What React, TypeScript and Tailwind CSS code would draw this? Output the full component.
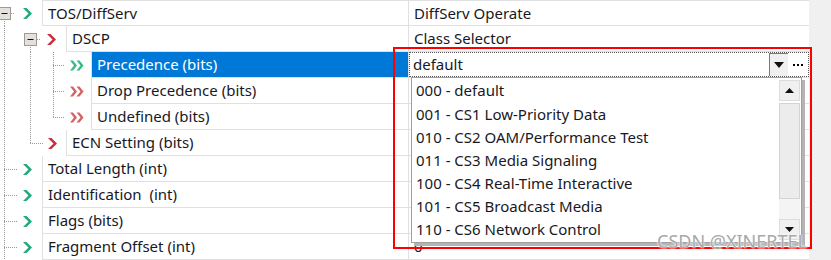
import React from "react";

type Seg = [number, number, number]; // x, y1, y2
type Row = {
  label: string;
  value?: string;
  indent: number;
  vlines: Seg[];
  hline?: [number, number];
  box?: number;
  icon: "green" | "red" | "green2" | "red2";
  iconX: number;
  selected?: boolean;
  editor?: boolean;
};

const rows: Row[] = [
  { label: "TOS/DiffServ", value: "DiffServ Operate", indent: 42, vlines: [[4, 19, 26]], hline: [11, 15], box: -2, icon: "green", iconX: 23 },
  { label: "DSCP", value: "Class Selector", indent: 66, vlines: [[4, 0, 26], [30, 19, 26]], hline: [37, 41], box: 24, icon: "red", iconX: 47 },
  { label: "Precedence (bits)", indent: 91, vlines: [[4, 0, 26], [30, 0, 26], [53, 0, 26]], hline: [53, 65], icon: "green2", iconX: 70, selected: true, editor: true },
  { label: "Drop Precedence (bits)", indent: 91, vlines: [[4, 0, 26], [30, 0, 26], [53, 0, 26]], hline: [53, 65], icon: "red2", iconX: 70 },
  { label: "Undefined (bits)", indent: 91, vlines: [[4, 0, 26], [30, 0, 26], [53, 0, 13]], hline: [53, 65], icon: "red2", iconX: 70 },
  { label: "ECN Setting (bits)", indent: 66, vlines: [[4, 0, 26], [30, 0, 13]], hline: [30, 44], icon: "red", iconX: 48 },
  { label: "Total Length (int)", indent: 42, vlines: [[4, 0, 26]], hline: [4, 18], icon: "green", iconX: 23 },
  { label: "Identification  (int)", indent: 42, vlines: [[4, 0, 26]], hline: [4, 18], icon: "green", iconX: 23 },
  { label: "Flags (bits)", indent: 42, vlines: [[4, 0, 26]], hline: [4, 18], icon: "green", iconX: 23 },
  { label: "Fragment Offset (int)", value: "0", indent: 42, vlines: [[4, 0, 26]], hline: [4, 18], icon: "green", iconX: 23 },
];

const options = [
  "000 - default",
  "001 - CS1 Low-Priority Data",
  "010 - CS2 OAM/Performance Test",
  "011 - CS3 Media Signaling",
  "100 - CS4 Real-Time Interactive",
  "101 - CS5 Broadcast Media",
  "110 - CS6 Network Control",
];

function Chevron({ x, color, y = 8, w = 9, h = 11, t = 3.5 }: { x: number; color: string; y?: number; w?: number; h?: number; t?: number }) {
  const m = y + h / 2;
  return <polygon points={`${x},${y} ${x + t},${y} ${x + w},${m} ${x + t},${y + h} ${x},${y + h} ${x + w - t},${m}`} fill={color} />;
}

function Gutter({ row }: { row: Row }) {
  const dot = "#9a9a9a";
  const dbl = row.icon === "green2" ? "#3cb884" : "#d06464";
  return (
    <svg width={row.indent} height={26} className="block shrink-0">
      {row.vlines.map(([x, a, b], i) => (
        <line key={i} x1={x + 0.5} y1={a} x2={x + 0.5} y2={b} stroke={dot} strokeDasharray="1 1" />
      ))}
      {row.hline && <line x1={row.hline[0]} y1={13.5} x2={row.hline[1]} y2={13.5} stroke={dot} strokeDasharray="1 1" />}
      {row.box !== undefined && (
        <g>
          <rect x={row.box + 0.5} y={7.5} width={12} height={12} fill="#e4e1dc" stroke="#9c9a96" />
          <line x1={row.box + 3.5} y1={13.5} x2={row.box + 9.5} y2={13.5} stroke="#111" />
        </g>
      )}
      {row.icon === "green" && <Chevron x={row.iconX} color="#22a87a" />}
      {row.icon === "red" && <Chevron x={row.iconX} color="#c8303c" />}
      {(row.icon === "green2" || row.icon === "red2") && (
        <g>
          <Chevron x={row.iconX} y={8.5} w={7} h={10} t={3} color={dbl} />
          <Chevron x={row.iconX + 6.5} y={8.5} w={7} h={10} t={3} color={dbl} />
        </g>
      )}
    </svg>
  );
}

function Editor() {
  return (
    <div className="flex h-full w-full items-stretch border border-dotted border-[#555]">
      <div className="flex flex-1 items-center pl-[3px]">default</div>
      <div className="flex w-[19px] items-center justify-center border-l border-t border-[#7a7a7a] bg-[#f0f0f0]">
        <svg width="10" height="6"><polygon points="0,0 10,0 5,6" fill="#111" /></svg>
      </div>
      <div className="flex w-[20px] items-center justify-center gap-[2px]">
        <span className="h-[2px] w-[2px] bg-black" />
        <span className="h-[2px] w-[2px] bg-black" />
        <span className="h-[2px] w-[2px] bg-black" />
      </div>
    </div>
  );
}

export default function App() {
  return (
    <div className="relative h-[260px] w-[831px] overflow-hidden bg-white font-['Noto_Sans',sans-serif] text-[15px] text-[#18181f]">
      {rows.map((row, i) => (
        <div key={i} className="flex h-[26px]">
          <div className="flex w-[408px]">
            <Gutter row={row} />
            <div
              className={`flex flex-1 items-center border-b border-l border-[#e0e0e0] pl-[5px] ${i === 0 ? "border-t" : ""} ${
                row.selected ? "bg-[#0078d7] text-white" : ""
              }`}
            >
              <span className="whitespace-pre">{row.label}</span>
            </div>
          </div>
          <div className={`flex w-[401px] items-center border-b border-l border-[#e0e0e0] ${i === 0 ? "border-t" : ""} ${row.editor ? "" : "pl-[5px]"}`}>
            {row.editor ? <Editor /> : row.value}
          </div>
          <div className="flex-1 bg-[#f0f0f0]" />
        </div>
      ))}

      {/* dropdown list */}
      <div className="absolute left-[411px] top-[77px] flex h-[166px] w-[391px] border border-[#a0a0a0] bg-white shadow-[3px_3px_0_#b4b4b4]">
        <div className="flex flex-1 flex-col pl-[4px] pt-[1px]">
          {options.map((o) => (
            <div key={o} className="flex h-[23.2px] items-center">
              {o}
            </div>
          ))}
        </div>
        <div className="my-[2px] mr-[1px] flex w-[21px] flex-col">
          <div className="flex h-[21px] items-center justify-center border border-[#dcdcdc] bg-[#f0f0f0]">
            <svg width="9" height="5"><polygon points="0,5 9,5 4.5,0" fill="#111" /></svg>
          </div>
          <div className="mt-[2px] h-[96px] border border-[#d4d4d4] bg-[#ececec]" />
          <div className="flex-1 bg-[#f4f4f4]" />
          <div className="flex h-[21px] items-center justify-center border border-[#dcdcdc] bg-[#f0f0f0]">
            <svg width="9" height="5"><polygon points="0,0 9,0 4.5,5" fill="#111" /></svg>
          </div>
        </div>
      </div>

      {/* highlight frame */}
      <div className="pointer-events-none absolute left-[393px] top-[47px] h-[202px] w-[419px] border-2 border-[#ff0000]" />

      {/* watermark */}
      <div className="absolute left-[657px] top-[228px] text-[18px] text-[#a8a8a8] [text-shadow:0_0_2px_#fff,0_0_2px_#fff]">
        CSDN @XINERTEL
      </div>
    </div>
  );
}
